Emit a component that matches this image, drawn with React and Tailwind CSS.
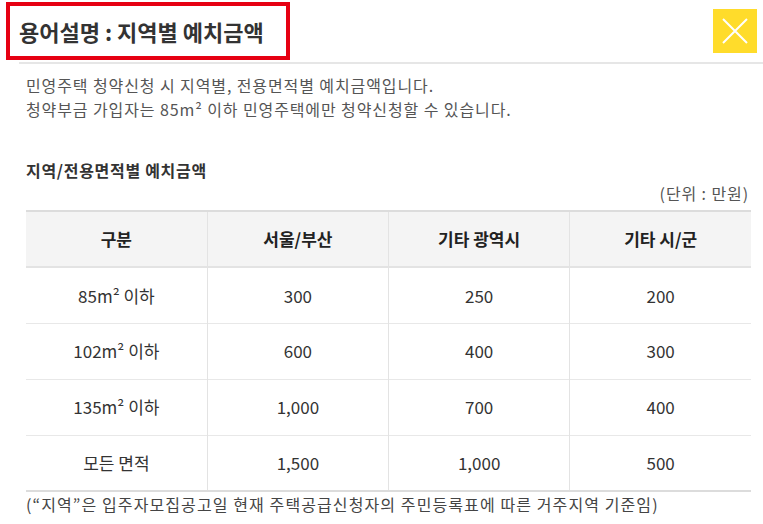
const rows = [
  ['85m² 이하', '300', '250', '200'],
  ['102m² 이하', '600', '400', '300'],
  ['135m² 이하', '1,000', '700', '400'],
  ['모든 면적', '1,500', '1,000', '500'],
];

const heads = ['구분', '서울/부산', '기타 광역시', '기타 시/군'];

export default function App() {
  return (
    <div
      className="w-[763px] h-[524px] bg-white overflow-hidden text-[#333]"
      style={{ fontFamily: '"Noto Sans CJK KR", "Noto Sans", sans-serif' }}
    >
      {/* header */}
      <div className="flex justify-between h-[62px]">
        <div className="ml-[6px] mt-[2px] w-[284px] h-[58px] border-[4px] border-[#e60012] flex items-center pl-[9px]">
          <h1 className="text-[22px] font-bold text-[#333]">용어설명 : 지역별 예치금액</h1>
        </div>
        <button className="mt-[9px] mr-[6px] w-[44px] h-[44px] bg-[#ffdc2b] flex items-center justify-center">
          <svg width="26" height="26" viewBox="0 0 26 26">
            <path d="M1 1L25 25M25 1L1 25" stroke="#fff" strokeWidth="2" />
          </svg>
        </button>
      </div>
      <div className="ml-[19px] h-[2px] bg-[#e6e6e6]"></div>

      <div className="pl-[26px] pr-[12px]">
        <div className="pt-[9px] text-[16px] leading-[24px] tracking-[0.9px] text-[#555]">
          <p>민영주택 청약신청 시 지역별, 전용면적별 예치금액입니다.</p>
          <p>청약부금 가입자는 85m² 이하 민영주택에만 청약신청할 수 있습니다.</p>
        </div>

        <h2 className="mt-[37px] text-[16px] leading-[24px] tracking-[0.7px] font-bold text-[#333]">지역/전용면적별 예치금액</h2>
        <p className="mt-[0px] text-right text-[16px] leading-[22px] tracking-[0.9px] text-[#555] pr-[2px]">(단위 : 만원)</p>

        <table className="mt-[6px] w-full table-fixed border-collapse border-t-2 border-b-2 border-[#dcdcdc]">
          <thead>
            <tr className="bg-[#f4f4f4] h-[56px]">
              {heads.map((h, i) => (
                <th
                  key={h}
                  className={`text-[17px] font-bold text-[#222] border-b-2 border-[#e3e3e3] ${i > 0 ? 'border-l border-l-[#e3e3e3]' : ''}`}
                >
                  {h}
                </th>
              ))}
            </tr>
          </thead>
          <tbody>
            {rows.map((r, ri) => (
              <tr key={ri} className={`h-[56px] ${ri < rows.length - 1 ? 'border-b border-[#e8e8e8]' : ''}`}>
                {r.map((c, i) => (
                  <td
                    key={i}
                    className={`text-center text-[17px] text-[#333] ${i > 0 ? 'border-l border-[#e3e3e3]' : ''}`}
                  >
                    {c}
                  </td>
                ))}
              </tr>
            ))}
          </tbody>
        </table>

        <p className="mt-[1px] text-[16px] leading-[22px] tracking-[1.1px] text-[#444]">(“지역”은 입주자모집공고일 현재 주택공급신청자의 주민등록표에 따른 거주지역 기준임)</p>
      </div>
    </div>
  );
}
